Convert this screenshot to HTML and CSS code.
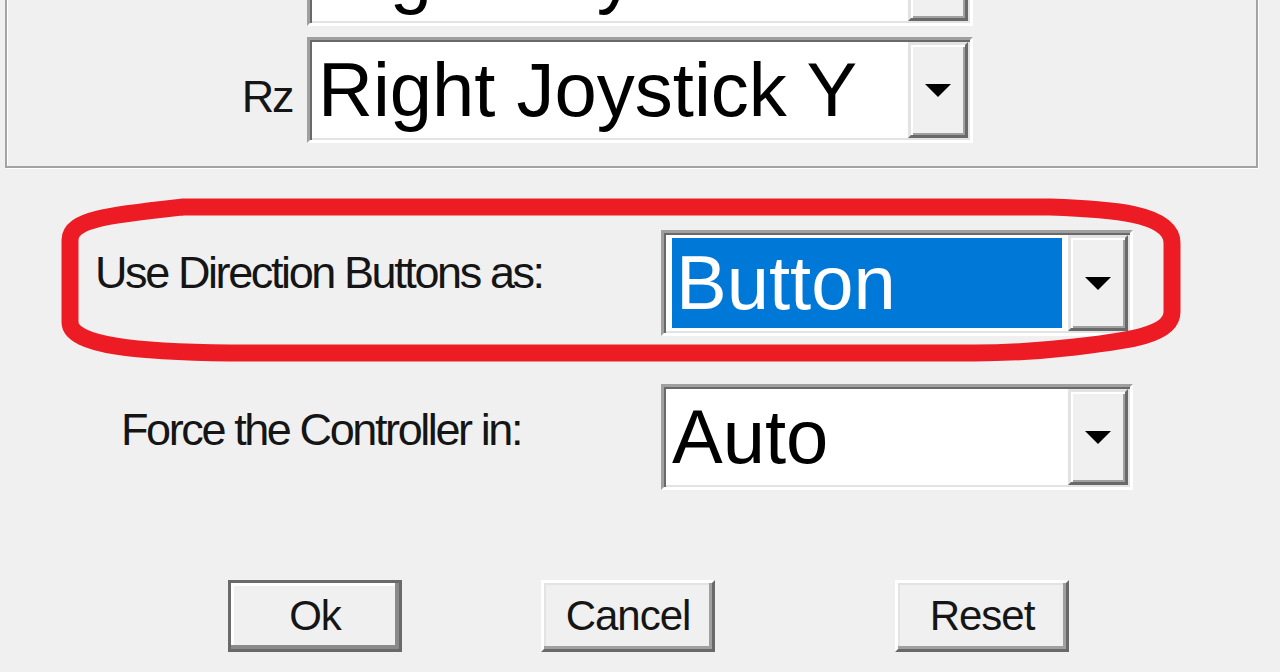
FILE: index.html
```html
<!DOCTYPE html>
<html lang="en">
  <head>
    <meta charset="UTF-8" />
    <meta name="viewport" content="width=device-width, initial-scale=1.0" />
    <title>Controller Settings</title>
    <link rel="stylesheet" href="styles.css">
  </head>
  <body>
    <div class="dialog">
      <div class="group">
        <div class="axis-row">
          <span class="axis-label">Z</span>
          <div class="combo combo-axis">
            <span class="combo-value">Right Joystick X</span>
            <span class="combo-btn"><i class="arrow"></i></span>
          </div>
        </div>
        <div class="axis-row">
          <span class="axis-label">Rz</span>
          <div class="combo combo-axis">
            <span class="combo-value">Right Joystick Y</span>
            <span class="combo-btn"><i class="arrow"></i></span>
          </div>
        </div>
      </div>

      <div class="option-row first">
        <span class="option-label">Use Direction Buttons as:</span>
        <div class="combo combo-option">
          <span class="combo-value selected">Button</span>
          <span class="combo-btn"><i class="arrow"></i></span>
        </div>
      </div>

      <div class="option-row second">
        <span class="option-label">Force the Controller in:</span>
        <div class="combo combo-option">
          <span class="combo-value">Auto</span>
          <span class="combo-btn"><i class="arrow"></i></span>
        </div>
      </div>

      <div class="actions">
        <button class="btn btn-default">Ok</button>
        <button class="btn btn-cancel">Cancel</button>
        <button class="btn btn-reset">Reset</button>
      </div>
    </div>

    <!-- red marker drawn over the screenshot -->
    <svg class="markup" width="1280" height="672" viewBox="0 0 1280 672">
      <path
        d="M 183 207 L 1050 207 C 1110 209 1172 213 1172 243 L 1172 312 C 1172 336 1125 341 1075 347 C 1040 351 1010 353 975 353 L 230 353 C 140 352 70 346 70 322 L 70 240 C 70 219 110 215 183 207 Z"
        fill="none"
        stroke="#ed1c24"
        stroke-width="17"
        stroke-linejoin="round"
      />
    </svg>
  </body>
</html>
```

FILE: styles.css
```css
* {
  margin: 0;
  padding: 0;
  box-sizing: border-box;
}
html,
body {
  height: 100%;
}
body {
  position: relative;
  background: #f0f0f0;
  overflow: hidden;
  font-family: "Liberation Sans", Arial, sans-serif;
  color: #151515;
}

/* group box with the axis combos */
.group {
  width: 1253px;
  margin: -102px 0 0 5px;
  padding: 20px 0 23px;
  border: 2px solid #a3a3a3;
  box-shadow: 1px 1px 0 #fff, inset 1px 1px 0 #fff;
  display: flex;
  flex-direction: column;
  gap: 11px;
}
.axis-row {
  display: flex;
  align-items: flex-start;
}
.axis-label {
  width: 285px;
  margin: 34px 15px 0 0;
  text-align: right;
  font-size: 45px;
  line-height: 52px;
  letter-spacing: -2.4px;
}

/* classic combo box */
.combo {
  display: flex;
  height: 106px;
  padding: 2px;
  background: #fff;
  border: 3px solid;
  border-color: #a0a0a0 #fff #fff #a0a0a0;
  box-shadow: inset 2px 2px 0 #696969, inset -2px -2px 0 #e3e3e3;
}
.combo-axis {
  width: 666px;
}
.combo-option {
  width: 472px;
  margin-left: auto;
}
.combo-value {
  flex: 1;
  padding-left: 6px;
  font-size: 76px;
  line-height: 96px;
  color: #000;
  white-space: nowrap;
  overflow: hidden;
}
.combo-value.selected {
  margin: 3px 6px;
  padding-left: 4px;
  line-height: 90px;
  background: #0078d7;
  color: #fff;
}
.combo-btn {
  width: 60px;
  display: flex;
  align-items: center;
  justify-content: center;
  background: #f0f0f0;
  border: 3px solid;
  border-color: #e3e3e3 #696969 #696969 #e3e3e3;
  box-shadow: inset 2px 2px 0 #fff, inset -2px -2px 0 #a0a0a0;
}
.arrow {
  width: 0;
  height: 0;
  border-left: 13px solid transparent;
  border-right: 13px solid transparent;
  border-top: 13px solid #000;
}

/* option rows under the group */
.option-row {
  width: 1133px;
  display: flex;
  align-items: flex-start;
}
.option-row.first {
  margin-top: 62px;
  padding-left: 95px;
}
.option-row.second {
  margin-top: 48px;
  padding-left: 121px;
}
.option-label {
  font-size: 45px;
  line-height: 52px;
  letter-spacing: -2.4px;
  white-space: nowrap;
}
.first .option-label {
  margin-top: 17px;
}
.second .option-label {
  margin-top: 20px;
}

/* dialog buttons */
.actions {
  display: flex;
  margin-top: 90px;
  padding-left: 228px;
}
.btn {
  width: 174px;
  height: 72px;
  display: flex;
  align-items: center;
  justify-content: center;
  background: #f0f0f0;
  color: #151515;
  font: 42px/1 "Liberation Sans", Arial, sans-serif;
  letter-spacing: -1px;
  border: 3px solid;
  border-color: #fff #696969 #696969 #fff;
  box-shadow: inset -3px -3px 0 #a0a0a0, inset 2px 2px 0 #e3e3e3;
}
.btn-default {
  border-color: #6a6a6a;
  box-shadow: inset -4px -4px 0 #8a8a8a, inset 3px 3px 0 #fff;
}
.btn-cancel {
  margin-left: 139px;
}
.btn-reset {
  margin-left: 180px;
}

.markup {
  position: absolute;
  top: 0;
  left: 0;
  pointer-events: none;
}
```
